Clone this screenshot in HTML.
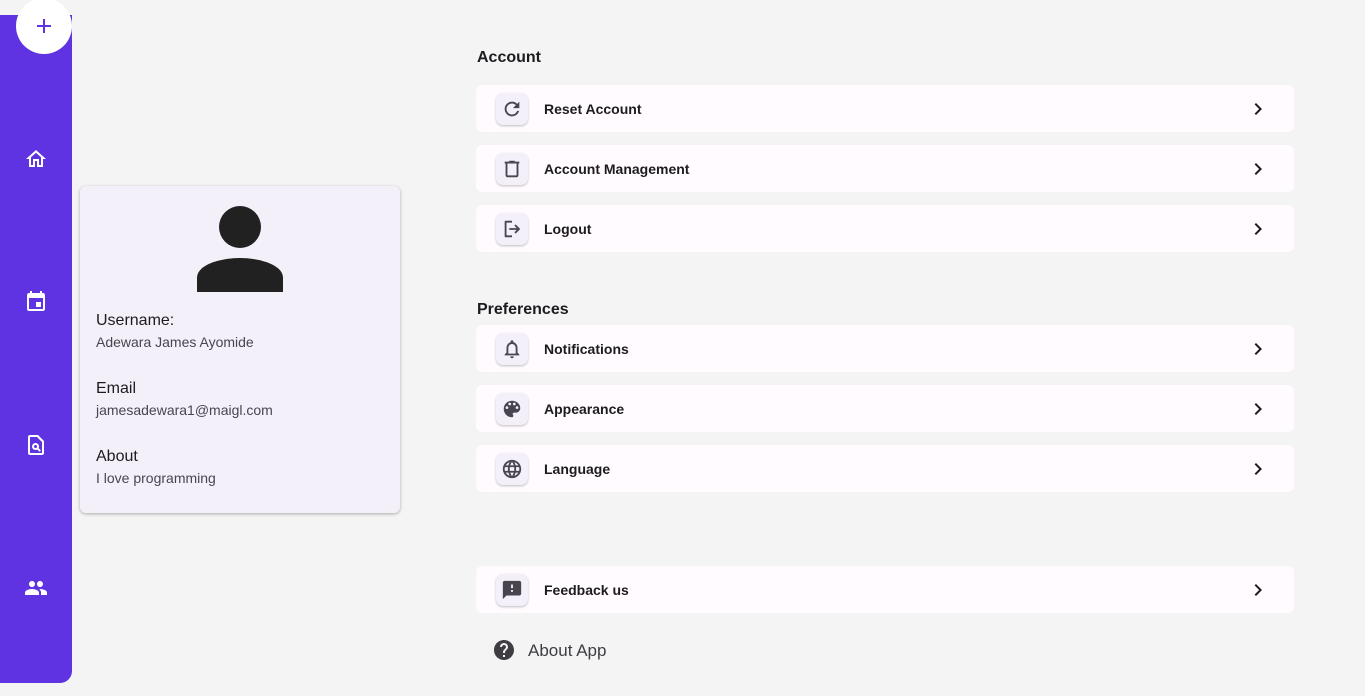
<!DOCTYPE html>
<html><head><meta charset="utf-8"><style>
*{box-sizing:border-box;margin:0;padding:0}
body{width:1365px;height:696px;background:#f4f4f4;font-family:"Liberation Sans","DejaVu Sans",sans-serif;position:relative;overflow:hidden;color:#1d1b20}
.side{position:absolute;left:0;top:15px;width:72px;height:668px;background:#5f33e1;border-radius:0 0 12px 0}
.fab{position:absolute;left:16px;top:-17px;width:56px;height:56px;border-radius:50%;background:#fff}
.fab:before{content:"";position:absolute;left:21px;top:27px;width:14px;height:2px;background:#5f33e1}
.fab:after{content:"";position:absolute;left:27px;top:21px;width:2px;height:14px;background:#5f33e1}
.si{position:absolute;left:24px}
.card{position:absolute;left:80px;top:186px;width:320px;height:327px;background:#f4f0f9;border-radius:6px;box-shadow:0 1px 3px rgba(0,0,0,.3)}
.lbl{position:absolute;left:16px;font-size:16px;color:#1d1b20}
.val{position:absolute;left:16px;font-size:14px;color:#49454f}
h3{position:absolute;left:477px;font-size:16px;font-weight:bold;color:#1d1b20}
.row{position:absolute;left:476px;width:818px;height:47px;background:#fffbfe;border-radius:6px}
.ib{position:absolute;left:20px;top:8px;width:32px;height:32px;border-radius:7px;background:#f4f0f9;box-shadow:0 1px 2px rgba(0,0,0,.25);display:flex;align-items:center;justify-content:center}
.t{position:absolute;left:68px;top:16px;font-size:14px;font-weight:bold;color:#1d1b20}
.ch{position:absolute;left:770px;top:12px}
</style></head><body>
<div class="side">
<div class="fab"></div>
<svg class="si" style="top:132px" width="24" height="24" viewBox="0 0 24 24"><path fill="#fff" d="M12 5.7l5 4.5V18h-2v-6H9v6H7v-7.8l5-4.5M12 3L2 12h3v8h6v-6h2v6h6v-8h3L12 3z"/></svg>
<svg class="si" style="top:275px" width="24" height="24" viewBox="0 0 24 24"><path fill="#fff" d="M17 12h-5v5h5v-5zM16 1v2H8V1H6v2H5c-1.1 0-2 .9-2 2v14c0 1.1.9 2 2 2h14c1.1 0 2-.9 2-2V5c0-1.1-.9-2-2-2h-1V1h-2zm3 18H5V8h14v11z"/></svg>
<svg class="si" style="top:418px" width="24" height="24" viewBox="0 0 24 24"><path fill="#fff" d="M14 2H6c-1.1 0-2 .9-2 2v16c0 1.1.9 2 2 2h12c1.1 0 2-.9 2-2V8l-6-6zm4 18H6V4h7l5 5v11zm-6.5-10a3.5 3.5 0 0 0 0 7c.6 0 1.2-.2 1.7-.5l2.3 2.3 1.4-1.4-2.3-2.3c.3-.5.5-1.1.5-1.7a3.5 3.5 0 0 0-3.6-3.4zm0 5a1.5 1.5 0 1 1 0-3 1.5 1.5 0 0 1 0 3z"/></svg>
<svg class="si" style="top:561px" width="24" height="24" viewBox="0 0 24 24"><path fill="#fff" d="M16 11c1.66 0 2.99-1.34 2.99-3S17.66 5 16 5c-1.66 0-3 1.34-3 3s1.34 3 3 3zm-8 0c1.66 0 2.99-1.34 2.99-3S9.66 5 8 5C6.34 5 5 6.34 5 8s1.34 3 3 3zm0 2c-2.33 0-7 1.17-7 3.5V19h14v-2.5c0-2.33-4.67-3.5-7-3.5zm8 0c-.29 0-.62.02-.97.05 1.16.84 1.97 1.97 1.97 3.45V19h6v-2.5c0-2.33-4.67-3.5-7-3.5z"/></svg>
</div>
<div class="card">
<svg style="position:absolute;left:117px;top:20px" width="86" height="86" viewBox="0 0 86 86"><circle cx="43" cy="21" r="21" fill="#212121"/><path fill="#212121" d="M0 86V72C0 58 25 52 43 52S86 58 86 72V86z"/></svg>
<div class="lbl" style="top:126px">Username:</div>
<div class="val" style="top:148px">Adewara James Ayomide</div>
<div class="lbl" style="top:194px">Email</div>
<div class="val" style="top:216px">jamesadewara1@maigl.com</div>
<div class="lbl" style="top:262px">About</div>
<div class="val" style="top:284px">I love programming</div>
</div>
<h3 style="top:49px">Account</h3>
<h3 style="top:301px">Preferences</h3>
<div class="row" style="top:85px"><div class="ib"><svg width="22" height="22" viewBox="0 0 24 24"><path fill="#49454f" d="M17.65 6.35A7.96 7.96 0 0 0 12 4a8 8 0 1 0 7.73 10h-2.08A6 6 0 1 1 12 6c1.66 0 3.14.69 4.22 1.78L13 11h7V4l-2.35 2.35z"/></svg></div><div class="t">Reset Account</div><svg class="ch" width="24" height="24" viewBox="0 0 24 24"><path fill="#1d1b20" d="M10 6L8.59 7.41 13.17 12l-4.58 4.59L10 18l6-6z"/></svg></div>
<div class="row" style="top:145px"><div class="ib"><svg width="22" height="22" viewBox="0 0 24 24"><path fill="#49454f" d="M15 4V3H9v1H4v2h1v13c0 1.1.9 2 2 2h10c1.1 0 2-.9 2-2V6h1V4h-5zm2 15H7V6h10v13z"/></svg></div><div class="t">Account Management</div><svg class="ch" width="24" height="24" viewBox="0 0 24 24"><path fill="#1d1b20" d="M10 6L8.59 7.41 13.17 12l-4.58 4.59L10 18l6-6z"/></svg></div>
<div class="row" style="top:205px"><div class="ib"><svg width="22" height="22" viewBox="0 0 24 24"><path fill="#49454f" d="M5 21c-.55 0-1-.45-1-1V4c0-.55.45-1 1-1h7v2H6v14h6v2H5zm11-4l-1.4-1.45L17.15 13H9v-2h8.15l-2.55-2.55L16 7l5 5-5 5z"/></svg></div><div class="t">Logout</div><svg class="ch" width="24" height="24" viewBox="0 0 24 24"><path fill="#1d1b20" d="M10 6L8.59 7.41 13.17 12l-4.58 4.59L10 18l6-6z"/></svg></div>
<div class="row" style="top:325px"><div class="ib"><svg width="22" height="22" viewBox="0 0 24 24"><path fill="#49454f" d="M12 22c1.1 0 2-.9 2-2h-4c0 1.1.9 2 2 2zm6-6v-5c0-3.07-1.63-5.64-4.5-6.32V4c0-.83-.67-1.5-1.5-1.5s-1.5.67-1.5 1.5v.68C7.64 5.36 6 7.92 6 11v5l-2 2v1h16v-1l-2-2zm-2 1H8v-6c0-2.48 1.51-4.5 4-4.5s4 2.02 4 4.5v6z"/></svg></div><div class="t">Notifications</div><svg class="ch" width="24" height="24" viewBox="0 0 24 24"><path fill="#1d1b20" d="M10 6L8.59 7.41 13.17 12l-4.58 4.59L10 18l6-6z"/></svg></div>
<div class="row" style="top:385px"><div class="ib"><svg width="22" height="22" viewBox="0 0 24 24"><path fill="#49454f" d="M12 3a9 9 0 0 0 0 18c.83 0 1.5-.67 1.5-1.5 0-.39-.15-.74-.39-1.01-.23-.26-.38-.61-.38-.99 0-.83.67-1.5 1.5-1.5H16c2.76 0 5-2.24 5-5 0-4.42-4.03-8-9-8zm-5.5 9a1.5 1.5 0 1 1 0-3 1.5 1.5 0 0 1 0 3zm3-4a1.5 1.5 0 1 1 0-3 1.5 1.5 0 0 1 0 3zm5 0a1.5 1.5 0 1 1 0-3 1.5 1.5 0 0 1 0 3zm3 4a1.5 1.5 0 1 1 0-3 1.5 1.5 0 0 1 0 3z"/></svg></div><div class="t">Appearance</div><svg class="ch" width="24" height="24" viewBox="0 0 24 24"><path fill="#1d1b20" d="M10 6L8.59 7.41 13.17 12l-4.58 4.59L10 18l6-6z"/></svg></div>
<div class="row" style="top:445px"><div class="ib"><svg width="22" height="22" viewBox="0 0 24 24"><path fill="#49454f" d="M11.99 2C6.47 2 2 6.48 2 12s4.47 10 9.99 10C17.52 22 22 17.52 22 12S17.52 2 11.99 2zm6.93 6h-2.95a15.65 15.65 0 0 0-1.38-3.56A8.03 8.03 0 0 1 18.92 8zM12 4.04c.83 1.2 1.48 2.53 1.91 3.96h-3.82c.43-1.43 1.08-2.76 1.91-3.96zM4.26 14C4.1 13.36 4 12.69 4 12s.1-1.36.26-2h3.38c-.08.66-.14 1.32-.14 2s.06 1.34.14 2H4.26zm.82 2h2.95c.32 1.25.78 2.45 1.38 3.56A7.99 7.99 0 0 1 5.08 16zm2.95-8H5.08a7.99 7.99 0 0 1 4.33-3.56A15.65 15.65 0 0 0 8.03 8zM12 19.96c-.83-1.2-1.48-2.53-1.91-3.96h3.82c-.43 1.43-1.08 2.76-1.91 3.96zM14.34 14H9.66c-.09-.66-.16-1.32-.16-2s.07-1.35.16-2h4.68c.09.65.16 1.32.16 2s-.07 1.34-.16 2zm.25 5.56c.6-1.11 1.06-2.31 1.38-3.56h2.95a8.03 8.03 0 0 1-4.33 3.56zM16.36 14c.08-.66.14-1.32.14-2s-.06-1.34-.14-2h3.38c.16.64.26 1.31.26 2s-.1 1.36-.26 2h-3.38z"/></svg></div><div class="t">Language</div><svg class="ch" width="24" height="24" viewBox="0 0 24 24"><path fill="#1d1b20" d="M10 6L8.59 7.41 13.17 12l-4.58 4.59L10 18l6-6z"/></svg></div>
<div class="row" style="top:566px"><div class="ib"><svg width="22" height="22" viewBox="0 0 24 24"><path fill="#49454f" d="M20 2H4c-1.1 0-1.99.9-1.99 2L2 22l4-4h14c1.1 0 2-.9 2-2V4c0-1.1-.9-2-2-2zm-7 12h-2v-2h2v2zm0-4h-2V6h2v4z"/></svg></div><div class="t">Feedback us</div><svg class="ch" width="24" height="24" viewBox="0 0 24 24"><path fill="#1d1b20" d="M10 6L8.59 7.41 13.17 12l-4.58 4.59L10 18l6-6z"/></svg></div>
<svg style="position:absolute;left:492px;top:638px" width="24" height="24" viewBox="0 0 24 24"><path fill="#3f3c44" d="M12 2C6.48 2 2 6.48 2 12s4.48 10 10 10 10-4.48 10-10S17.52 2 12 2zm1 17h-2v-2h2v2zm2.07-7.75l-.9.92C13.45 12.9 13 13.5 13 15h-2v-.5c0-1.1.45-2.1 1.17-2.83l1.24-1.26c.37-.36.59-.86.59-1.41 0-1.1-.9-2-2-2s-2 .9-2 2H8c0-2.21 1.79-4 4-4s4 1.79 4 4c0 .88-.36 1.68-.93 2.25z"/></svg>
<div style="position:absolute;left:528px;top:641px;font-size:17px;color:#3f3c44">About App</div>
</body></html>
